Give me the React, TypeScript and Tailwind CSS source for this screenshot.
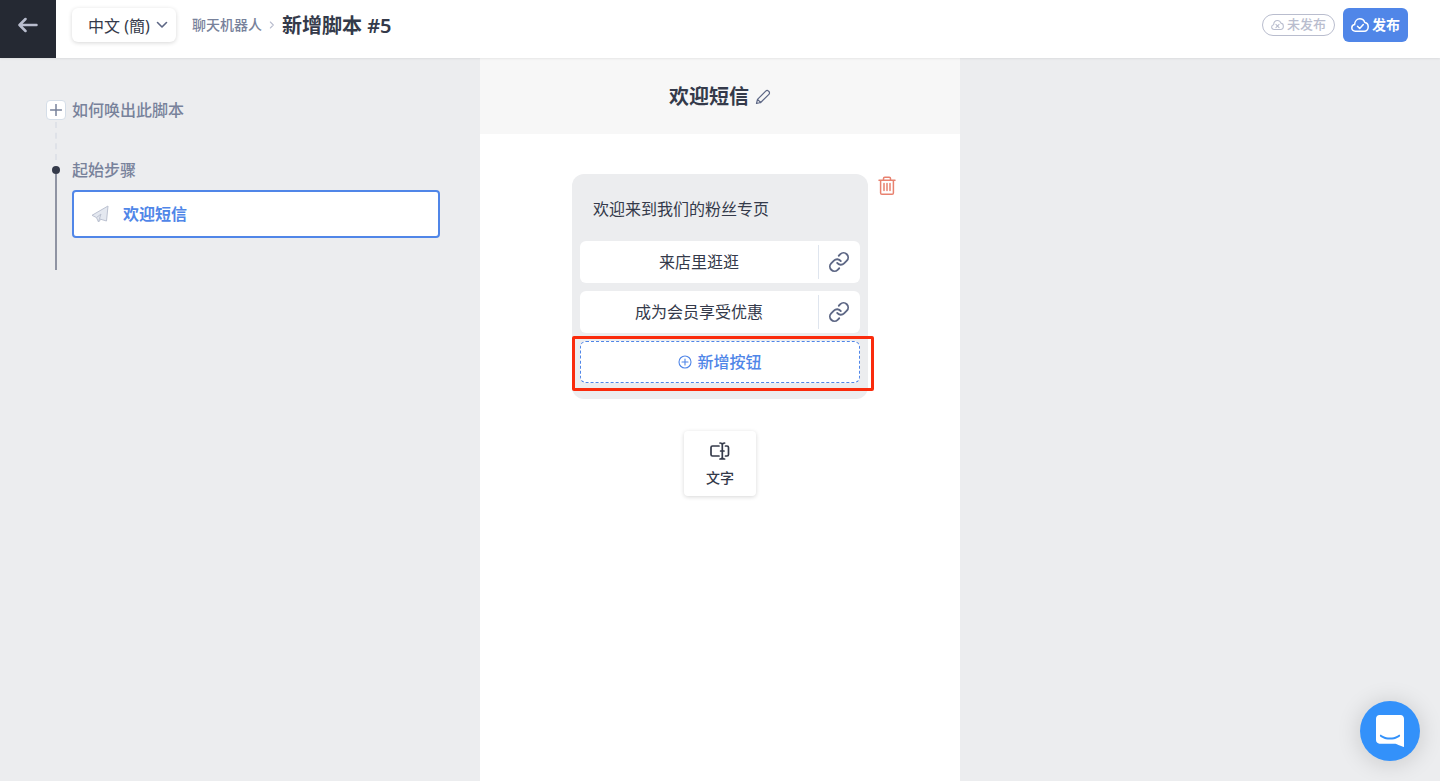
import React, { useState } from 'react';

interface IconProps {
  className?: string;
}

interface ReplyButton {
  id: number;
  label: string;
}

const replyButtons: ReplyButton[] = [
  { id: 1, label: '来店里逛逛' },
  { id: 2, label: '成为会员享受优惠' },
];

const strokeProps = {
  fill: 'none',
  stroke: 'currentColor',
  strokeLinecap: 'round' as const,
  strokeLinejoin: 'round' as const,
  'aria-hidden': true,
};

const BackIcon: React.FC<IconProps> = ({ className }) => (
  <svg viewBox="0 0 20 16" strokeWidth="2.5" className={className} {...strokeProps}>
    <path d="M18.500 8H2M7.500 2L1.500 8l6 6" />
  </svg>
);

const ChevronIcon: React.FC<IconProps> = ({ className }) => (
  <svg viewBox="0 0 12 12" strokeWidth="1.6" className={className} {...strokeProps}>
    <path d="M1.500 3.500L6 8l4.500-4.500" />
  </svg>
);

const CloudIcon: React.FC<IconProps & { mark: string }> = ({ className, mark }) => (
  <svg viewBox="0 0 18 14" strokeWidth="1.5" className={className} {...strokeProps}>
    <path d="M4.300 13.200C2.300 13.200 .8 11.800 .8 9.900c0-1.700 1.200-3 2.800-3.300C3.800 3.300 6 .8 8.900.8c2.300 0 4.100 1.400 4.900 3.600 2 .3 3.400 2 3.400 4.300 0 2.600-1.700 4.500-4 4.500z" />
    <path d={mark} />
  </svg>
);

const PlaneIcon: React.FC<IconProps> = ({ className }) => (
  <svg viewBox="0 0 18 18" fill="#e4e8f0" stroke="#bcc2d1" strokeLinejoin="round" aria-hidden className={className}>
    <path d="M17 1L1 10.300l4.500 2.300 2 4.400 2.300-2.700 5.700 1.700z" />
    <path d="M5.500 12.600L10 9l-1.500 4.500 1.300.8M7.500 17l1-3.500" fill="none" />
  </svg>
);

const PencilIcon: React.FC<IconProps> = ({ className }) => (
  <svg viewBox="0 0 16 16" strokeWidth="1.200" className={className} {...strokeProps}>
    <path d="M1.500 14.500l1-4.200 8.200-8.200c.8-.8 2-.8 2.800 0l.4.4c.8.8.8 2 0 2.800l-8.200 8.200zM2.500 10.300l3.200 3.200" />
  </svg>
);

const TrashIcon: React.FC<IconProps> = ({ className }) => (
  <svg viewBox="0 0 18 20" strokeWidth="1.500" className={className} {...strokeProps}>
    <path d="M1 4.200h16M5.500 4V2.600c0-.7.6-1.300 1.300-1.300h4.400c.7 0 1.300.6 1.300 1.300V4M2.600 4.200v12.700c0 .7.6 1.300 1.300 1.300h10.200c.7 0 1.300-.6 1.300-1.300V4.200M6 7.500v7M9 7.500v7M12 7.500v7" />
  </svg>
);

const LinkIcon: React.FC<IconProps> = ({ className }) => (
  <svg viewBox="0 0 24 24" strokeWidth="2" className={className} {...strokeProps}>
    <path d="M10 13a5 5 0 0 0 7.540.54l3-3a5 5 0 0 0-7.070-7.070l-1.720 1.710" />
    <path d="M14 11a5 5 0 0 0-7.540-.54l-3 3a5 5 0 0 0 7.070 7.070l1.710-1.710" />
  </svg>
);

const CirclePlusIcon: React.FC<IconProps> = ({ className }) => (
  <svg viewBox="0 0 14 14" strokeWidth="1.100" className={className} {...strokeProps}>
    <circle cx="7" cy="7" r="6" />
    <path d="M7 4v6M4 7h6" />
  </svg>
);

const TextFieldIcon: React.FC<IconProps> = ({ className }) => (
  <svg viewBox="0 0 20 18" strokeWidth="1.700" className={className} {...strokeProps}>
    <path d="M9 4H2.500C1.700 4 1 4.700 1 5.500v7c0 .8.7 1.500 1.500 1.500H9M15.500 4h1.500c.8 0 1.500.7 1.500 1.500v7c0 .8-.7 1.500-1.500 1.500h-1.500" />
    <path d="M10 1c1.300 0 2.300.6 2.300 1.800C12.300 1.600 13.300 1 14.600 1M10 17c1.300 0 2.300-.6 2.300-1.800 0 1.200 1 1.800 2.300 1.800M12.300 2.800v12.400M10.600 9H14" />
  </svg>
);

const ChatIcon: React.FC<IconProps> = ({ className }) => (
  <svg viewBox="0 0 28 32" fill="currentColor" aria-hidden className={className}>
    <path d="M28 32s-4.714-1.855-8.527-3.340H3.437C1.540 28.660 0 27.026 0 25.013V3.644C0 1.633 1.540 0 3.437 0h21.125c1.898 0 3.437 1.632 3.437 3.645v18.404H28V32zm-4.139-11.982a.88.88 0 0 0-1.292-.105c-.03.026-3.015 2.681-8.570 2.681-5.486 0-8.517-2.636-8.571-2.684a.88.88 0 0 0-1.290.107 1.010 1.010 0 0 0-.219.708.992.992 0 0 0 .318.664c.142.128 3.537 3.150 9.762 3.150 6.226 0 9.621-3.022 9.763-3.150a.992.992 0 0 0 .317-.664 1.010 1.010 0 0 0-.218-.707z" />
  </svg>
);

const TopBar: React.FC = () => {
  const [language, setLanguage] = useState('zh-Hans');

  return (
    <header className="relative z-10 flex h-[58px] items-stretch bg-white shadow-[0_1px_2px_rgba(0,0,0,0.07)]">
      <button type="button" aria-label="返回" className="flex w-14 justify-center bg-[#252933] pt-[17px] text-[#b9bdce]">
        <BackIcon className="h-4 w-5" />
      </button>
      <div className="flex flex-1 items-center pt-2 pr-8 pb-4 pl-4">
        <div className="relative">
          <select
            aria-label="语言"
            value={language}
            onChange={(e) => setLanguage(e.target.value)}
            className="h-[34px] w-[104px] appearance-none rounded-md bg-white pt-[2px] pl-4 text-base text-[#343a4a] shadow-[0_1px_4px_rgba(0,0,0,0.16)]"
          >
            <option value="zh-Hans">中文 (簡)</option>
            <option value="zh-Hant">中文 (繁)</option>
          </select>
          <ChevronIcon className="pointer-events-none absolute top-[11px] right-2 h-3 w-3 text-[#5d6785]" />
        </div>
        <nav className="ml-4 flex items-center">
          <a href="#bots" className="text-sm font-medium text-[#78829b]">聊天机器人</a>
          <ChevronIcon className="mx-[6px] h-2 w-2 -rotate-90 text-[#b9bdce]" />
          <h1 className="pt-px text-xl font-semibold text-[#343a4a]">新增脚本 #5</h1>
        </nav>
        <div className="ml-auto flex items-center gap-2">
          <span className="flex h-[22px] items-center gap-[3px] rounded-full border border-[#b9bdce] px-2 text-[13px] font-medium text-[#b9bdce]">
            <CloudIcon className="h-[10px] w-[13px]" mark="M6.800 6.200l4.400 4.400M11.200 6.200l-4.400 4.400" />
            未发布
          </span>
          <button type="button" className="flex h-[34px] items-center gap-[3px] rounded-md bg-[#5086e8] px-2 text-sm font-bold text-white">
            <CloudIcon className="h-[14px] w-[18px]" mark="M6.500 8.300l2.200 2.200 3.600-4" />
            发布
          </button>
        </div>
      </div>
    </header>
  );
};

const StepList: React.FC = () => (
  <aside className="px-10 pt-[42px] text-[#78829b]">
    <div className="flex h-[60px]">
      <div className="flex w-8 flex-col items-center gap-[2px]">
        <button
          type="button"
          aria-label="新增触发条件"
          className="flex h-5 w-5 items-center justify-center rounded-sm border border-[#d5dee8] bg-white text-[#78829b]"
        >
          <svg viewBox="0 0 12 12" strokeWidth="1.500" className="h-3 w-3" {...strokeProps}>
            <path d="M6 .5v11M.5 6h11" />
          </svg>
        </button>
        <div className="w-0 flex-1 border-l-2 border-dashed border-[#dfe2e8]" />
      </div>
      <h2 className="text-base leading-5 font-medium">如何唤出此脚本</h2>
    </div>
    <div className="flex h-[110px]">
      <div className="flex w-8 flex-col items-center pt-[6px]">
        <span className="h-2 w-2 rounded-full bg-[#343a4a]" />
        <div className="w-[2px] flex-1 bg-[#8f94a3]" />
      </div>
      <div className="flex-1">
        <h2 className="text-base leading-5 font-medium">起始步骤</h2>
        <button
          type="button"
          className="mt-[10px] flex h-12 w-full items-center gap-[14px] rounded-sm border-2 border-[#5086e8] bg-white px-[17px] text-base font-semibold text-[#5086e8]"
        >
          <PlaneIcon className="h-[18px] w-[18px]" />
          欢迎短信
        </button>
      </div>
    </div>
  </aside>
);

const MessageEditor: React.FC = () => (
  <main className="flex flex-col bg-white">
    <div className="flex items-center justify-center gap-[6px] bg-[#f7f7f7] pt-6 pb-[22px]">
      <h2 className="text-xl leading-[30px] font-semibold text-[#343a4a]">欢迎短信</h2>
      <button type="button" aria-label="编辑名称" className="text-[#5d6785]">
        <PencilIcon className="h-4 w-4" />
      </button>
    </div>
    <div className="flex flex-col items-center gap-8 pt-10">
      <div className="relative w-[296px] rounded-xl bg-[#ecedef] px-2 pb-4">
        <p className="px-[13px] pt-[23px] pb-5 text-base text-[#343a4a]">欢迎来到我们的粉丝专页</p>
        <div className="flex flex-col gap-2">
          {replyButtons.map((button) => (
            <div key={button.id} className="flex h-[42px] items-center rounded-md bg-white">
              <button type="button" className="flex-1 text-base text-[#343a4a]">{button.label}</button>
              <button
                type="button"
                aria-label="编辑链接"
                className="flex h-[34px] w-[42px] items-center justify-center border-l border-[#dfe5ee] pr-px text-[#5d6785]"
              >
                <LinkIcon className="h-[22px] w-[22px]" />
              </button>
            </div>
          ))}
          <div className="relative">
            <button
              type="button"
              className="flex h-[42px] w-full items-center justify-center gap-[5px] rounded-md border border-dashed border-[#5086e8] bg-white text-base font-medium text-[#5086e8]"
            >
              <CirclePlusIcon className="h-[14px] w-[14px]" />
              新增按钮
            </button>
            {/* highlight around the add button */}
            <div className="pointer-events-none absolute -top-[5px] -right-[14px] -bottom-2 -left-2 rounded-xs border-3 border-[#fa2b0c]" />
          </div>
        </div>
        <button type="button" aria-label="删除" className="absolute top-[2px] -right-7 text-[#e8816f]">
          <TrashIcon className="h-5 w-[18px]" />
        </button>
      </div>
      <button
        type="button"
        className="flex h-[65px] w-[72px] flex-col items-center gap-2 rounded-sm bg-white pt-[11px] text-sm font-medium text-[#343a4a] shadow-[0_1px_4px_rgba(0,0,0,0.16)]"
      >
        <TextFieldIcon className="h-[18px] w-5" />
        文字
      </button>
    </div>
  </main>
);

const App: React.FC = () => {
  return (
    <div
      lang="zh-Hans"
      className="flex min-h-screen flex-col bg-[#ecedef] font-['Noto_Sans','Noto_Sans_CJK_SC',sans-serif]"
    >
      <TopBar />
      <div className="grid flex-1 grid-cols-3">
        <StepList />
        <MessageEditor />
      </div>
      <button
        type="button"
        aria-label="在线客服"
        className="fixed right-5 bottom-5 flex h-[60px] w-[60px] items-center justify-center rounded-full bg-[#3391fa] text-white shadow-[0_2px_24px_rgba(0,0,0,0.16)]"
      >
        <ChatIcon className="h-8 w-7" />
      </button>
    </div>
  );
};

export default App;
